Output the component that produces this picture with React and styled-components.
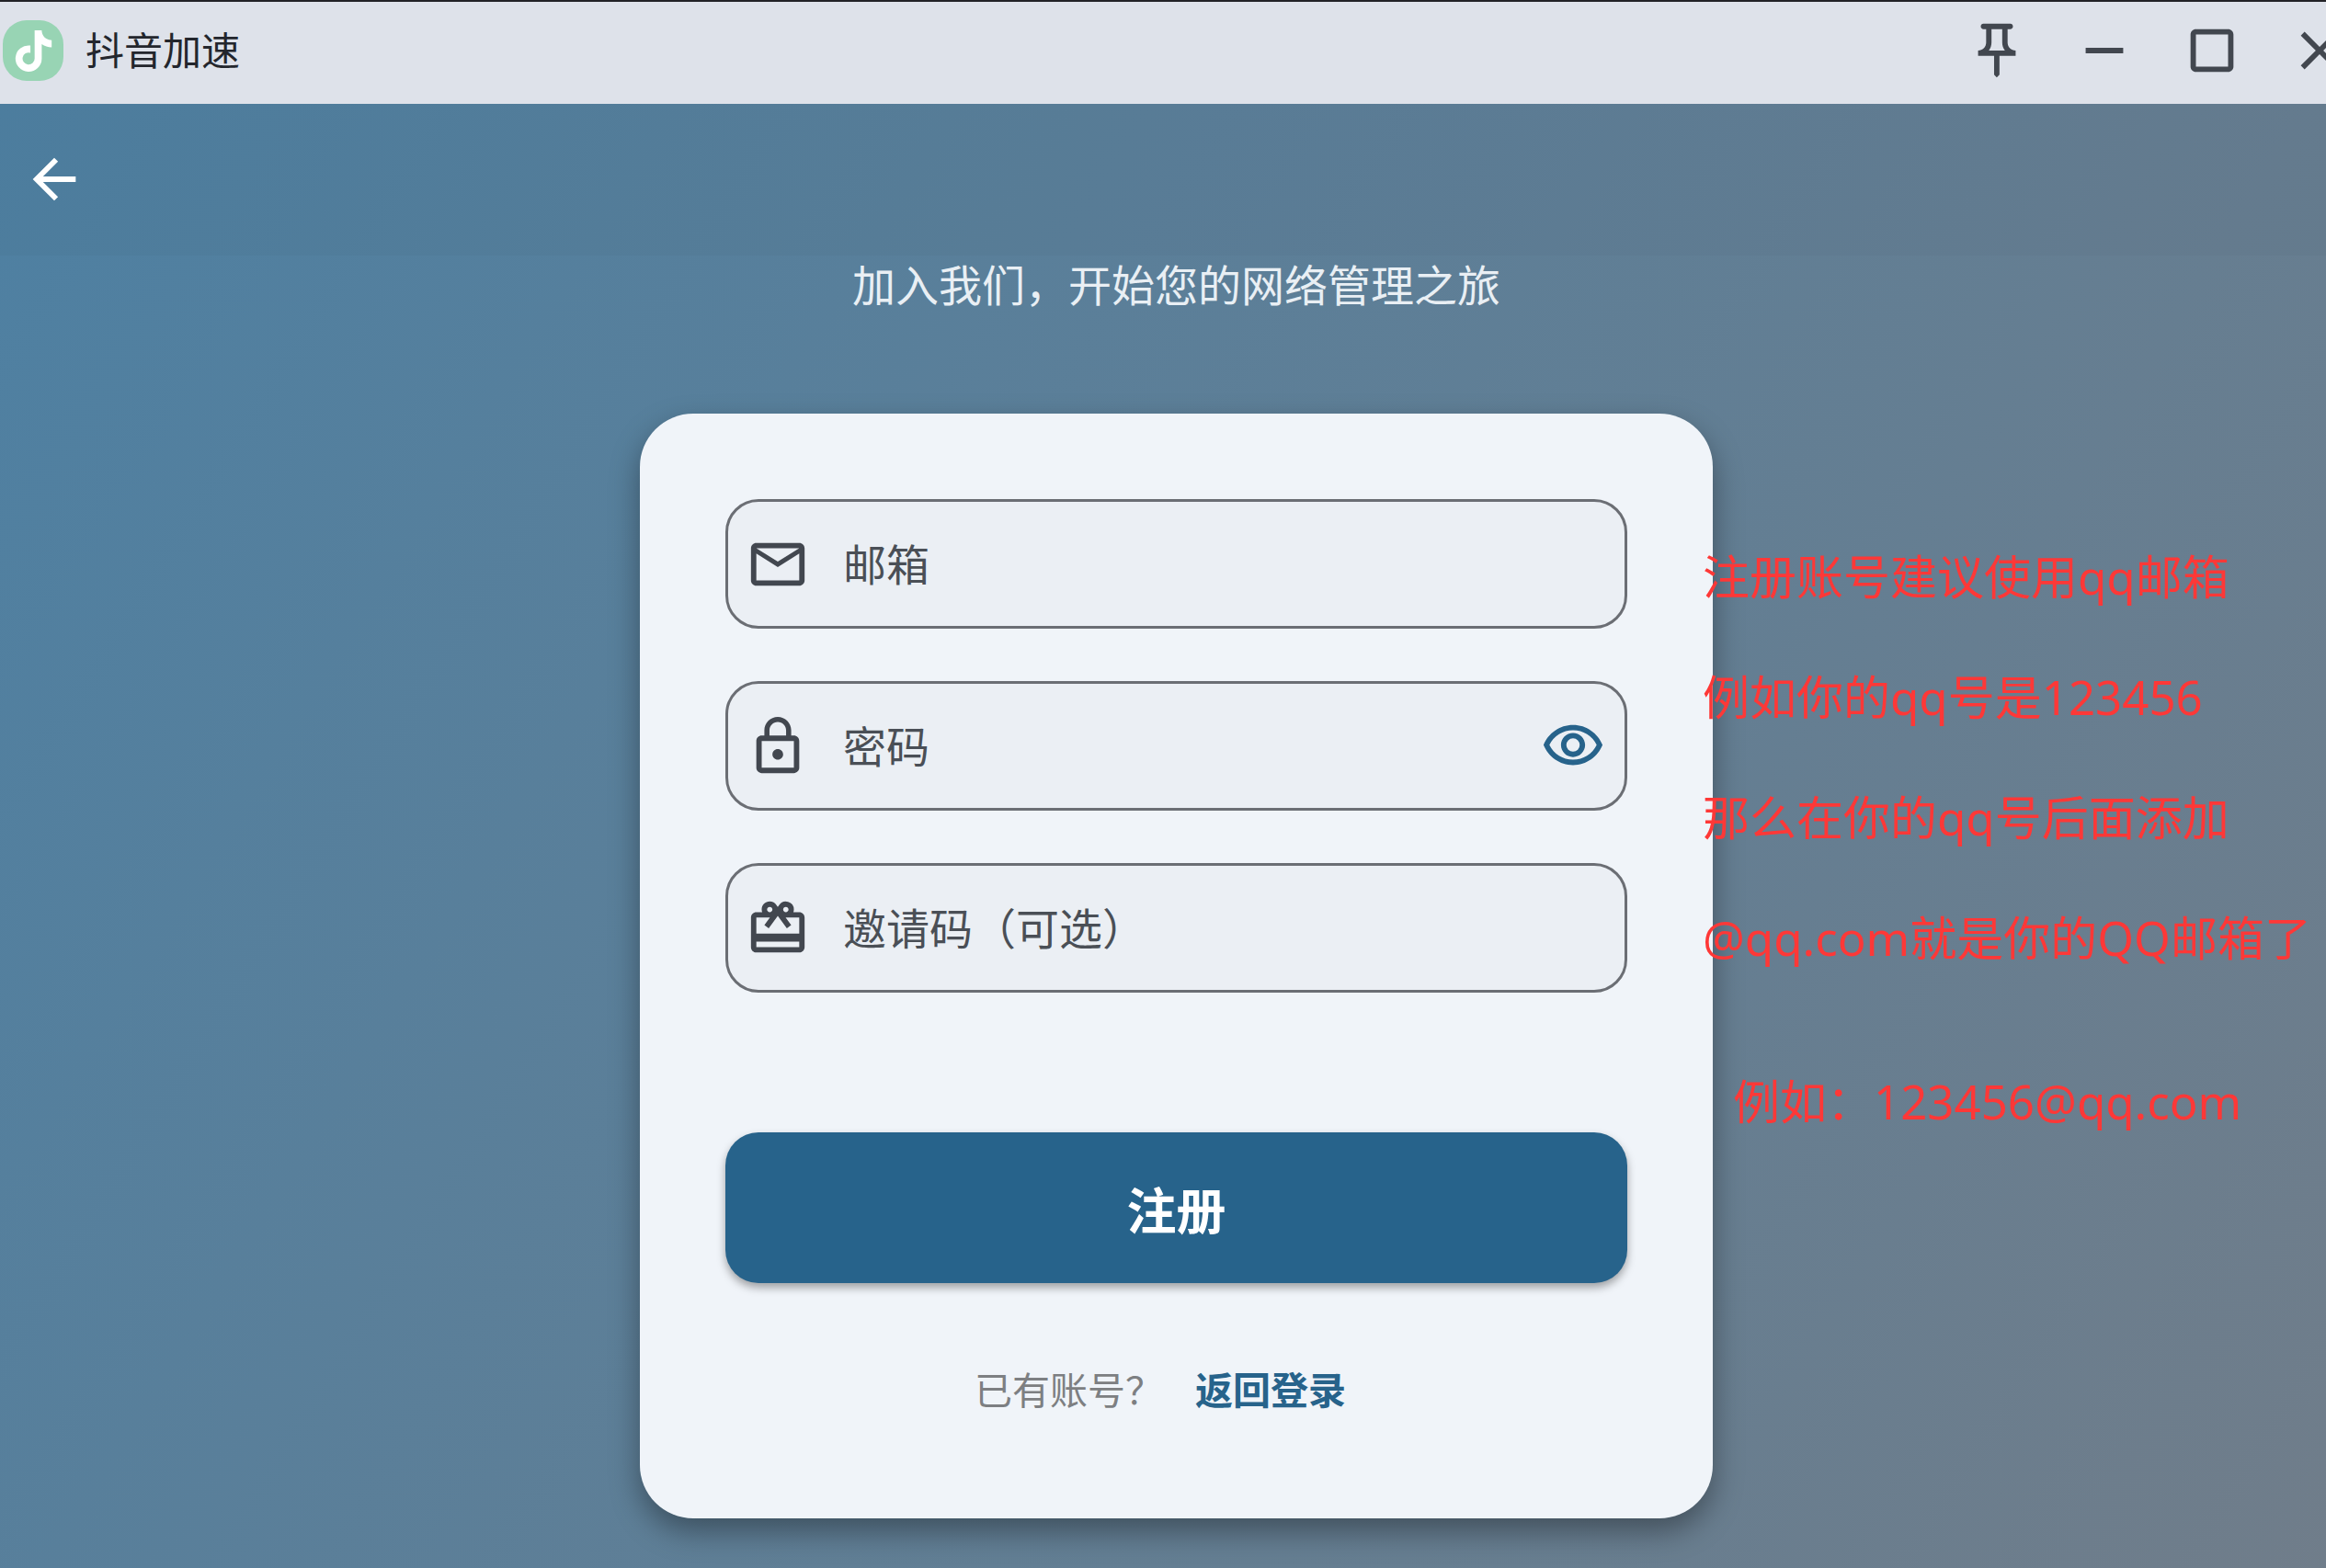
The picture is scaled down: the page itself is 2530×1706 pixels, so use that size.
import React, { useState } from "react";
import styled, { createGlobalStyle } from "styled-components";
import {
  MdArrowBack,
  MdCardGiftcard,
  MdClose,
  MdCropSquare,
  MdLockOutline,
  MdMailOutline,
  MdOutlinePushPin,
  MdOutlineVisibility,
  MdRemove,
} from "react-icons/md";
import { FaTiktok } from "react-icons/fa6";

const GlobalStyle = createGlobalStyle`
  * {
    box-sizing: border-box;
  }
  body {
    margin: 0;
    overflow: hidden;
    font-family: "Noto Sans", "Noto Sans CJK SC", sans-serif;
  }
  button {
    padding: 0;
    border: none;
    background: none;
    font-family: inherit;
    cursor: pointer;
  }
`;

/* the window hangs a little over the right edge of the screen */
const Window = styled.div`
  display: flex;
  flex-direction: column;
  min-height: 100vh;
  margin-right: -29px;
  border-top: 2px solid #222226;
`;

const TitleBar = styled.header`
  display: flex;
  align-items: center;
  justify-content: space-between;
  height: 111px;
  padding: 0 1px 5px 3px;
  background-color: #dee2ea;
  color: #42474f;
`;

const AppName = styled.div`
  display: flex;
  align-items: center;
  gap: 24px;
  color: #23262d;
  font-size: 42px;
  line-height: 60px;
`;

const AppLogo = styled.span`
  display: flex;
  align-items: center;
  justify-content: center;
  width: 66px;
  height: 66px;
  border-radius: 26px;
  background-color: #98d4b4;
  color: white;
`;

const WindowButtons = styled.div`
  display: flex;
  gap: 47px;
`;

const IconButton = styled.button`
  display: flex;
  color: ${(props) => props.$color || "#42474f"};
`;

const Page = styled.main`
  display: flex;
  flex: 1;
  flex-direction: column;
  align-items: center;
  background: linear-gradient(122deg, #4e80a2, #707d8a);
`;

const Toolbar = styled.nav`
  align-self: stretch;
  height: 165px;
  padding: 47px 24px;
  background-color: rgba(0, 0, 0, 0.02);
`;

const Slogan = styled.p`
  margin: 0 0 108px;
  color: #e9eff4;
  font-size: 47px;
  line-height: 64px;
`;

const Card = styled.section`
  position: relative;
  width: 1167px;
  padding: 93px;
  border-radius: 58px;
  background-color: #f0f4f9;
  box-shadow: 0 14px 32px rgba(0, 0, 0, 0.36);
`;

const Form = styled.form`
  display: flex;
  flex-direction: column;
  gap: 57px;
`;

const Field = styled.label`
  display: flex;
  align-items: center;
  height: 141px;
  padding: 0 21px 0 19px;
  border: 3px solid #6b6e74;
  border-radius: 36px;
  background-color: #ebeff4;
  color: #42474f;

  input {
    flex: 1;
    min-width: 0;
    margin-left: 36px;
    padding: 0;
    border: none;
    outline: none;
    background: none;
    color: #42474f;
    font-family: inherit;
    font-size: 47px;
    line-height: 64px;
  }
  input::placeholder {
    color: #4a4f56;
    opacity: 1;
  }
`;

const SubmitButton = styled.button`
  height: 164px;
  margin-top: 95px;
  border-radius: 36px;
  background-color: #27638b;
  color: white;
  font-size: 54px;
  font-weight: bold;
  box-shadow: 0 5px 10px rgba(0, 0, 0, 0.34);
`;

const LoginRow = styled.p`
  display: flex;
  justify-content: center;
  margin: 86px 0 17px;
  color: #7d7f82;
  font-size: 41px;
  line-height: 60px;

  a {
    padding: 0 35px;
    color: #27638b;
    font-weight: bold;
    text-decoration: none;
  }
`;

const Notes = styled.div`
  position: absolute;
  top: 112px;
  left: calc(100% - 11px);
  color: #fe3837;
  font-size: 51px;
  line-height: 131px;
  white-space: nowrap;

  p {
    margin: 0;
  }
  p:last-child {
    margin-top: 47px;
    padding-left: 33px;
  }
`;

const iconSize = 70;

const notes = [
  "注册账号建议使用qq邮箱",
  "例如你的qq号是123456",
  "那么在你的qq号后面添加",
  "@qq.com就是你的QQ邮箱了",
  "例如：123456@qq.com",
];

function App() {
  const [form, setForm] = useState({ email: "", password: "", invite: "" });
  const [showPassword, setShowPassword] = useState(false);

  const onChange = (e) => {
    setForm({ ...form, [e.target.name]: e.target.value });
  };

  const onSubmit = (e) => {
    e.preventDefault();
  };

  return (
    <>
      <GlobalStyle />
      <Window>
        <TitleBar>
          <AppName>
            <AppLogo>
              <FaTiktok size={45} />
            </AppLogo>
            抖音加速
          </AppName>
          <WindowButtons>
            <IconButton aria-label="置顶">
              <MdOutlinePushPin size={iconSize} />
            </IconButton>
            <IconButton aria-label="最小化">
              <MdRemove size={iconSize} />
            </IconButton>
            <IconButton aria-label="最大化">
              <MdCropSquare size={iconSize} />
            </IconButton>
            <IconButton aria-label="关闭">
              <MdClose size={iconSize} />
            </IconButton>
          </WindowButtons>
        </TitleBar>

        <Page>
          <Toolbar>
            <IconButton $color="white" aria-label="返回">
              <MdArrowBack size={iconSize} />
            </IconButton>
          </Toolbar>
          <Slogan>加入我们，开始您的网络管理之旅</Slogan>

          <Card>
            <Form onSubmit={onSubmit}>
              <Field htmlFor="email">
                <MdMailOutline size={iconSize} />
                <input
                  id="email"
                  name="email"
                  aria-label="邮箱"
                  placeholder="邮箱"
                  value={form.email}
                  onChange={onChange}
                />
              </Field>
              <Field htmlFor="password">
                <MdLockOutline size={iconSize} />
                <input
                  id="password"
                  name="password"
                  type={showPassword ? "text" : "password"}
                  aria-label="密码"
                  placeholder="密码"
                  value={form.password}
                  onChange={onChange}
                />
                <IconButton
                  type="button"
                  $color="#27638b"
                  aria-label="显示密码"
                  onClick={() => setShowPassword(!showPassword)}
                >
                  <MdOutlineVisibility size={iconSize} />
                </IconButton>
              </Field>
              <Field htmlFor="invite">
                <MdCardGiftcard size={iconSize} />
                <input
                  id="invite"
                  name="invite"
                  aria-label="邀请码（可选）"
                  placeholder="邀请码（可选）"
                  value={form.invite}
                  onChange={onChange}
                />
              </Field>
              <SubmitButton type="submit">注册</SubmitButton>
            </Form>

            <LoginRow>
              已有账号？<a href="#login">返回登录</a>
            </LoginRow>

            <Notes>
              {notes.map((note) => (
                <p key={note}>{note}</p>
              ))}
            </Notes>
          </Card>
        </Page>
      </Window>
    </>
  );
}

export default App;
